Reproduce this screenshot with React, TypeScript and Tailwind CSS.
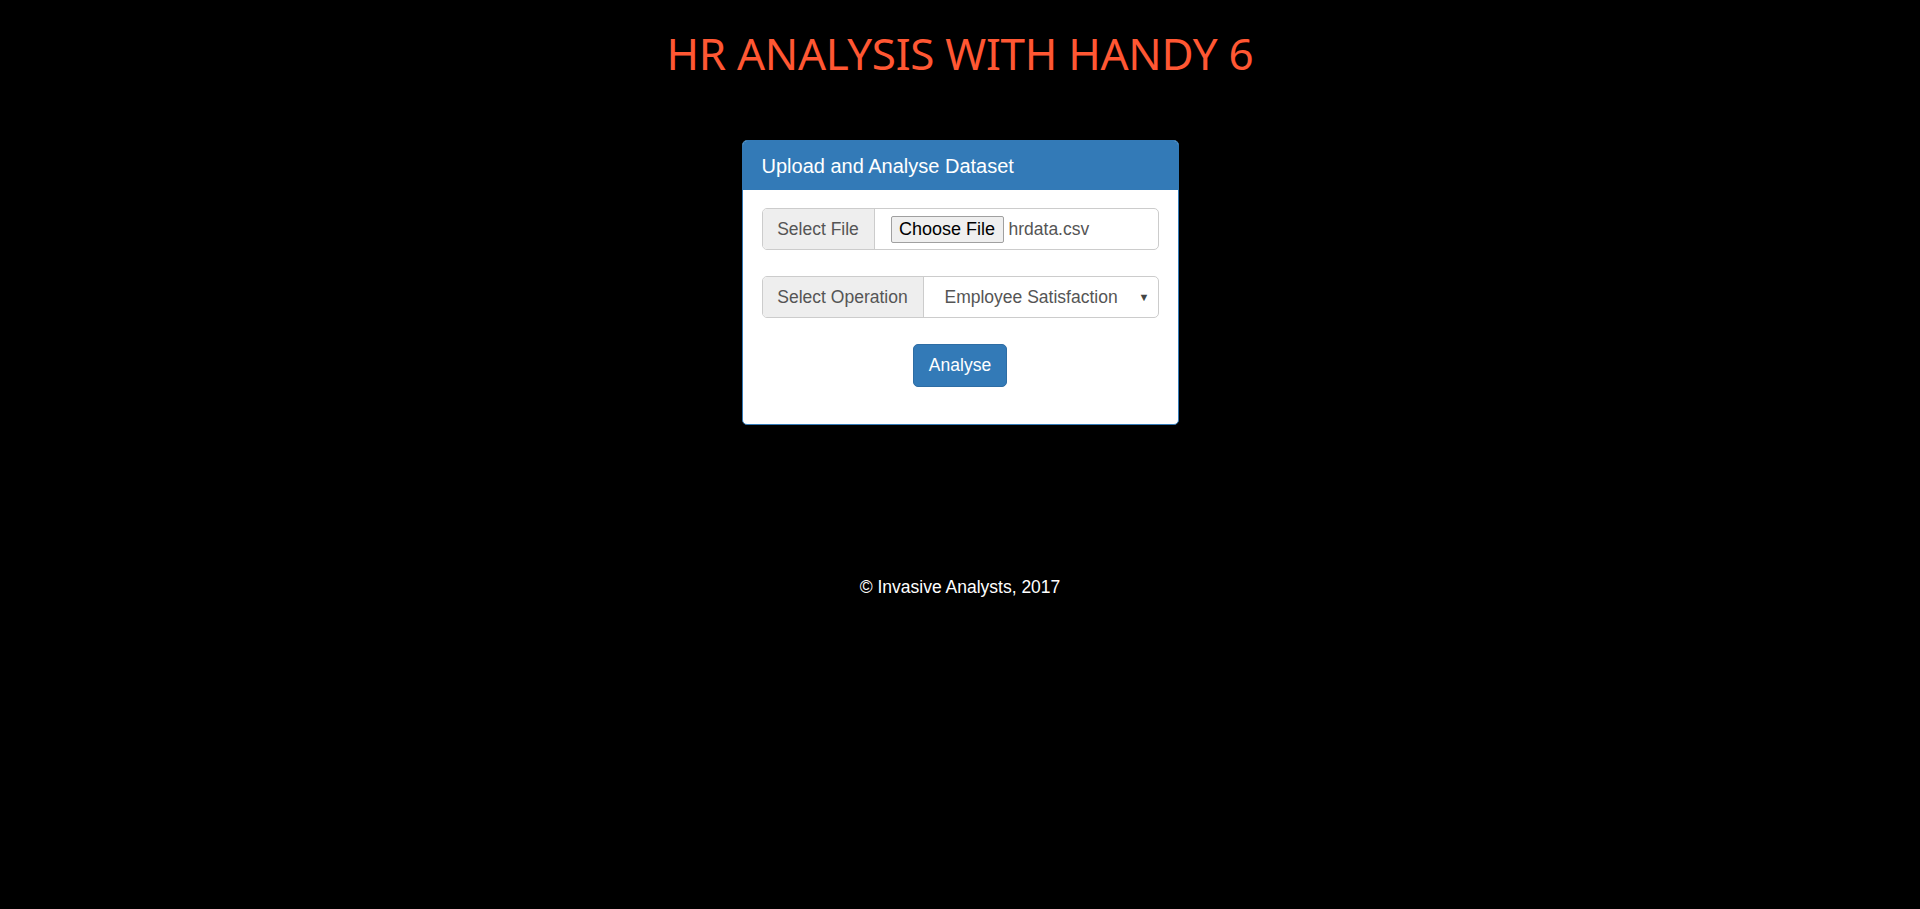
export default function App() {
  return (
    <div className="min-h-screen bg-black font-['Liberation_Sans',Arial,sans-serif] text-[17.5px] text-[#333]">
      <header className="pt-[25px] text-center">
        <h1 className="font-['Noto_Sans',sans-serif] text-[44px] leading-[56px] tracking-[-0.3px] text-[#ff5733]">
          HR ANALYSIS WITH HANDY 6
        </h1>
      </header>

      <main className="mt-[59px] flex justify-center">
        <div className="w-[437px] rounded-[5px] border border-[#337ab7] bg-white">
          <div className="flex h-[49px] items-center rounded-t-[4px] bg-[#337ab7] px-[19px] text-[20px] text-white">
            Upload and Analyse Dataset
          </div>
          <div className="px-[19px] pt-[18px] pb-[37px]">
            <div className="flex h-[42px] rounded-[5px] border border-[#ccc]">
              <span className="flex w-[112px] items-center justify-center rounded-l-[4px] border-r border-[#ccc] bg-[#eee] text-[#555]">
                Select File
              </span>
              <div className="flex flex-1 items-center pl-[16px] text-[#555]">
                <span className="flex h-[27px] w-[113px] items-center justify-center rounded-[2px] border border-[#a0a0a0] bg-[#efefef] text-[18px] text-black">
                  Choose File
                </span>
                <span className="ml-[5px]">hrdata.csv</span>
              </div>
            </div>

            <div className="mt-[26px] flex h-[42px] rounded-[5px] border border-[#ccc]">
              <span className="flex w-[161px] items-center justify-center rounded-l-[4px] border-r border-[#ccc] bg-[#eee] text-[#555]">
                Select Operation
              </span>
              <div className="flex flex-1 items-center pl-[21px] pr-[8px] text-[#555]">
                <span className="flex-1">Employee Satisfaction</span>
                <span className="text-[11px] text-[#444]">▼</span>
              </div>
            </div>

            <div className="mt-[26px] flex justify-center">
              <button className="h-[43px] w-[94px] rounded-[5px] border border-[#2e6da4] bg-[#337ab7] text-white">
                Analyse
              </button>
            </div>
          </div>
        </div>
      </main>

      <footer className="mt-[149px] text-center text-white">
        © Invasive Analysts, 2017
      </footer>
    </div>
  );
}
